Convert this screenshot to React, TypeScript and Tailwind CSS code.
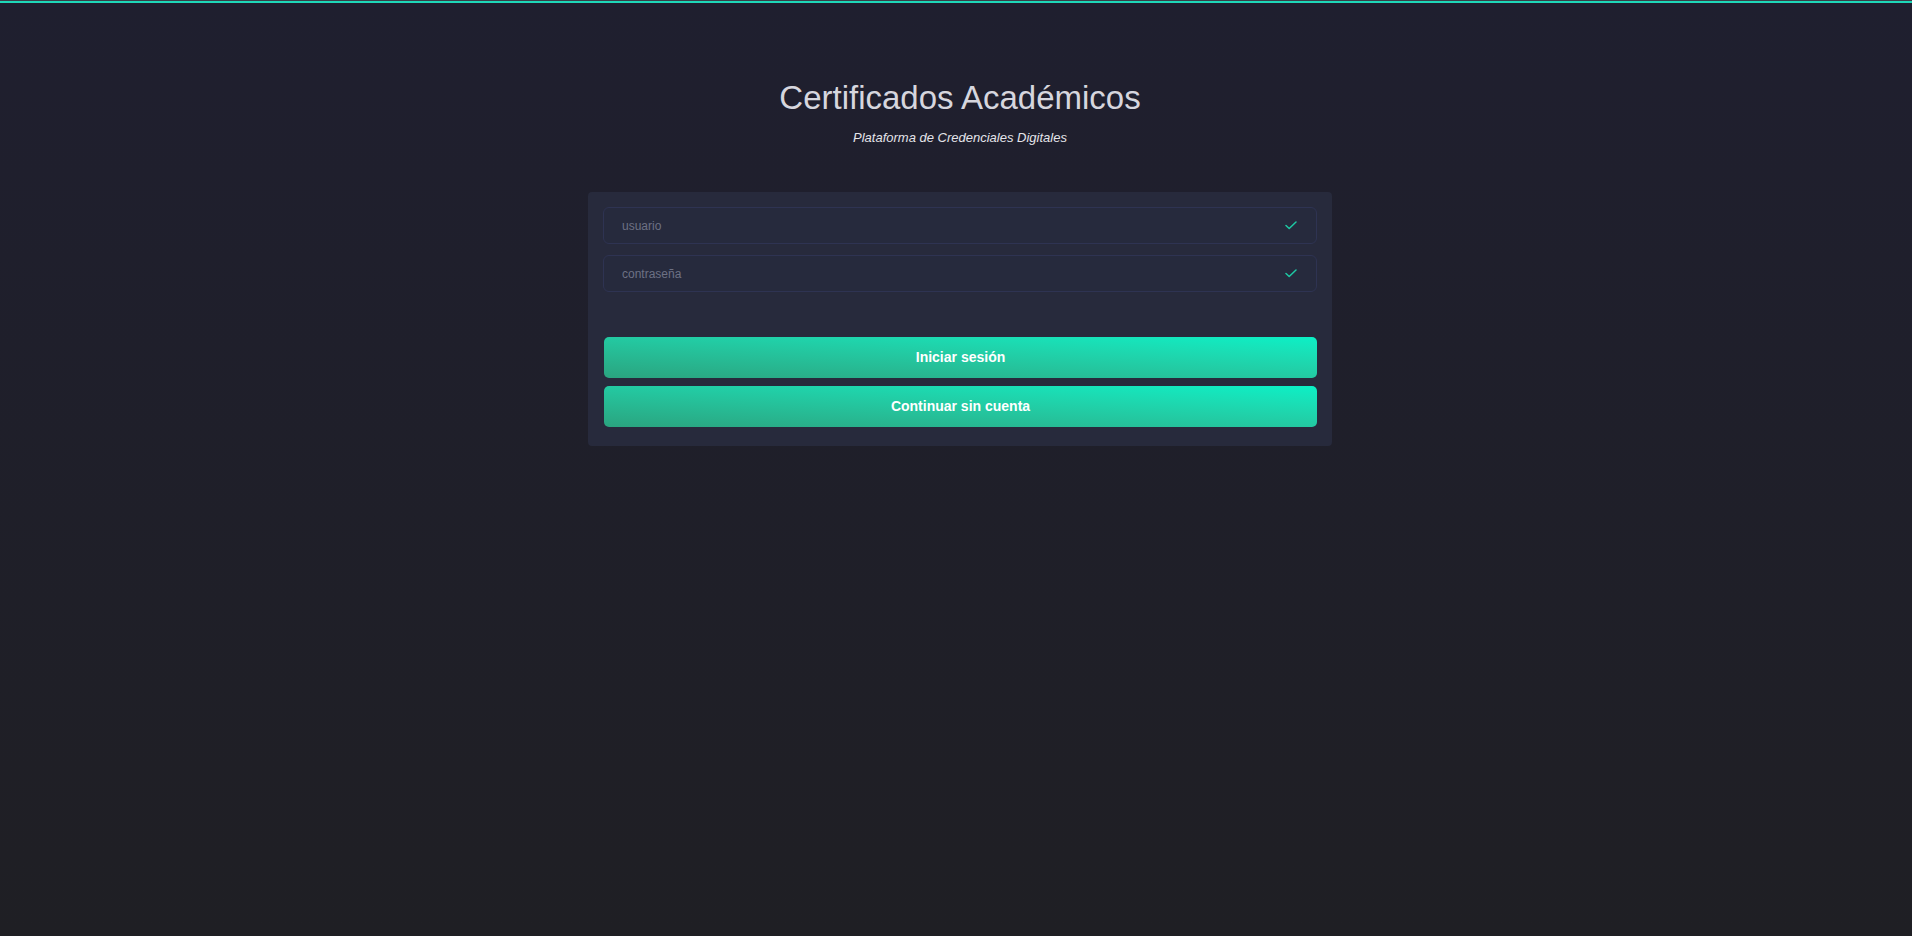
import React from "react";

function Check() {
  return (
    <svg width="12" height="9" viewBox="0 0 12 9" fill="none" className="shrink-0">
      <path d="M1 4.5 L4.2 7.5 L11 1" stroke="#1ec9a4" strokeWidth="1.5" strokeLinecap="round" strokeLinejoin="round" />
    </svg>
  );
}

function Field({ placeholder, type = "text" }: { placeholder: string; type?: string }) {
  return (
    <div className="flex h-[37px] items-center rounded-[6px] border border-[#2e3352] bg-[#262a3d] pl-[18px] pr-[19px]">
      <input
        type={type}
        placeholder={placeholder}
        className="flex-1 bg-transparent text-[12px] text-[#c8cad6] outline-none placeholder:text-[#6d7184]"
        style={{ fontFamily: '"Liberation Sans", Arial, sans-serif' }}
      />
      <Check />
    </div>
  );
}

function Btn({ label }: { label: string }) {
  return (
    <button className="h-[41px] w-full rounded-[5px] bg-gradient-to-tr from-[#2aa47f] to-[#0af0c6] text-[14px] font-bold text-white">
      {label}
    </button>
  );
}

export default function App() {
  return (
    <div
      className="min-h-[936px] w-full bg-gradient-to-b from-[#1f1f2f] to-[#1f1f24]"
      style={{ fontFamily: '"Liberation Sans", Arial, sans-serif' }}
    >
      <div className="h-px bg-[#3b3e48]" />
      <div className="h-[2px] bg-[#1ed8b8]" />
      <div className="flex flex-col items-center pl-[8px]">
        <h1 className="mt-[75px] text-[33px] leading-[40px] text-[#d6d6de]">Certificados Académicos</h1>
        <p className="mt-[12px] text-[13px] italic leading-[16px] text-[#e4e4ea]">Plataforma de Credenciales Digitales</p>
        <div className="mt-[46px] w-[744px] rounded-[4px] bg-[#272a3c] px-[15px] pt-[15px] pb-[19px]">
          <div className="flex flex-col gap-[11px]">
            <Field placeholder="usuario" />
            <Field placeholder="contraseña" type="password" />
          </div>
          <div className="mt-[45px] flex flex-col gap-[8px] pl-px">
            <Btn label="Iniciar sesión" />
            <Btn label="Continuar sin cuenta" />
          </div>
        </div>
      </div>
    </div>
  );
}
